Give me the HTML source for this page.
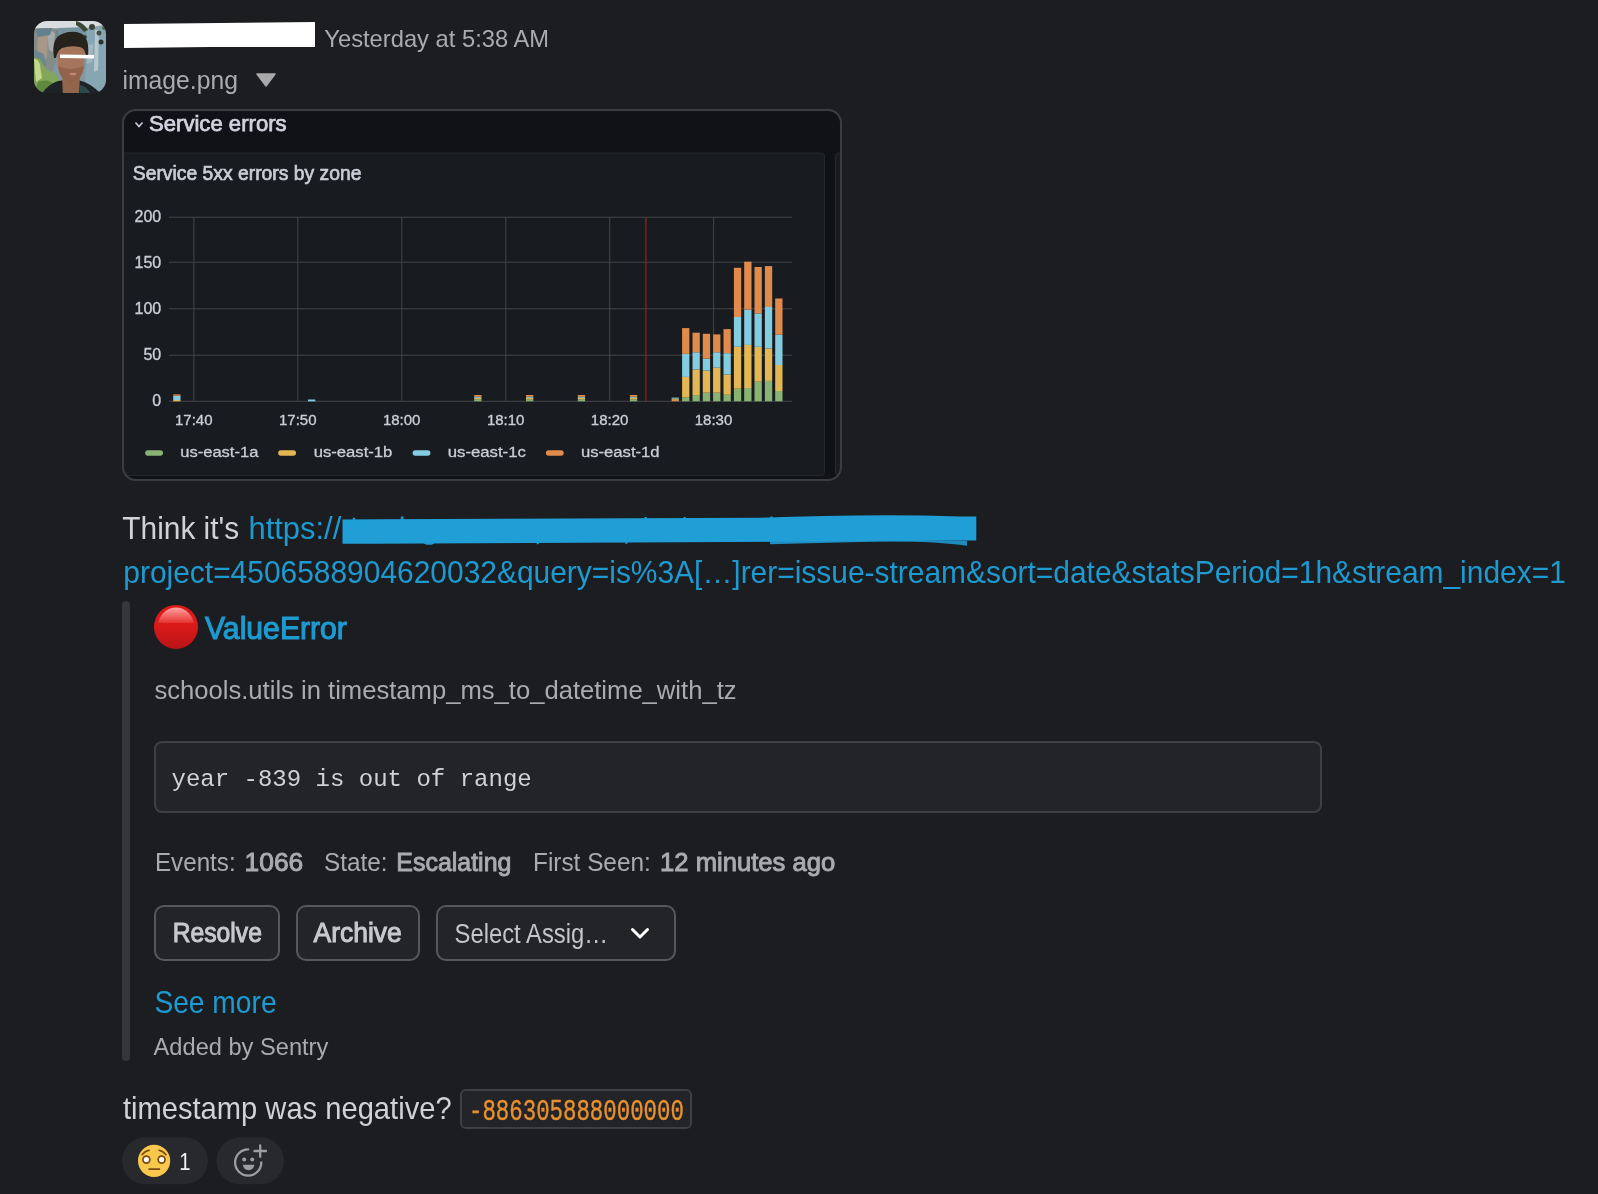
<!DOCTYPE html>
<html><head><meta charset="utf-8"><title>Slack message</title>
<style>
html,body{margin:0;padding:0;background:#1b1d21;width:1598px;height:1194px;overflow:hidden;font-family:"Liberation Sans",sans-serif;}
svg{position:absolute;left:0;top:0;display:block;will-change:transform}
</style></head>
<body>
<svg width="1598" height="1194" viewBox="0 0 1598 1194">
<defs>
<clipPath id="av"><rect x="34" y="21" width="72" height="72" rx="13" ry="13"/></clipPath>
<linearGradient id="sky" x1="0" y1="0" x2="0" y2="1">
<stop offset="0" stop-color="#e9ecef"/><stop offset="0.12" stop-color="#cfd8dc"/><stop offset="0.3" stop-color="#9fb2bd"/><stop offset="1" stop-color="#8fb0bf"/></linearGradient>
<radialGradient id="redball" cx="0.45" cy="0.3" r="0.75">
<stop offset="0" stop-color="#ff8a80"/><stop offset="0.25" stop-color="#f0453a"/><stop offset="0.6" stop-color="#d41a14"/><stop offset="1" stop-color="#a3100c"/></radialGradient>
<radialGradient id="yface" cx="0.5" cy="0.4" r="0.6">
<stop offset="0" stop-color="#fcd45a"/><stop offset="1" stop-color="#f2b52f"/></radialGradient>
</defs>
<defs><filter id="soft" x="-5%" y="-5%" width="110%" height="110%"><feGaussianBlur stdDeviation="0.6"/></filter></defs>
<g clip-path="url(#av)"><g filter="url(#soft)">
<rect x="30" y="17" width="80" height="80" fill="#7f98a2"/>
<path d="M30 17 L110 17 L110 24 Q90 29 70 29 Q50 27 30 31 Z" fill="#d9dde0"/>
<path d="M30 29 Q44 27 58 29 L60 36 L56 60 L50 80 L30 80 Z" fill="#858b88"/>
<path d="M38 33 Q44 30 48 35 L47 58 L40 62 L37 48 Z" fill="#a89886"/>
<path d="M47 31 Q52 30 55 34 L53 52 L49 50 Z" fill="#a3abad"/>
<path d="M34 50 L44 54 L46 66 L36 68 Z" fill="#6a8893"/>
<path d="M36 29 L52 28 L50 35 L38 37 Z" fill="#62808d"/>
<path d="M56 30 L62 30 L60 44 L55 44 Z" fill="#6f8488"/>
<path d="M86 28 L110 24 L110 97 L84 97 L86 60 Z" fill="#87a6b3"/>
<path d="M95 30 L99 30 L98 70 L94 72 Z" fill="#c3cfd4" opacity="0.8"/>
<path d="M88 45 L93 44 L92 62 L87 64 Z" fill="#b1c1c8" opacity="0.7"/>
<path d="M58 28 L86 27 L86 40 L58 36 Z" fill="#7793a0"/>
<path d="M76 21 Q84 23 88 30 L84 32 Q80 27 76 25 Z" fill="#3b4838"/>
<circle cx="92" cy="27" r="3" fill="#394537"/>
<circle cx="99" cy="33" r="2.5" fill="#435040"/>
<circle cx="101" cy="42" r="2.5" fill="#2b332d"/>
<circle cx="85" cy="37" r="2" fill="#3d4a3c"/>
<circle cx="104" cy="28" r="2" fill="#56644f"/>
<path d="M30 58 Q40 56 42 63 Q46 70 52 72 Q60 76 60 85 L58 97 L30 97 Z" fill="#82a65a"/>
<path d="M34 59 Q38 58 40 65 L42 78 L36 82 Z" fill="#c3d88a"/>
<path d="M38 82 Q48 78 54 84 L52 97 L34 97 Z" fill="#5e8a3c"/>
<path d="M40 97 Q46 85 58 81 L66 80 L78 80 Q92 83 104 97 Z" fill="#1d2226"/>
<path d="M80 85 Q88 86 92 97 L80 97 Z" fill="#2c4850"/>
<path d="M62 76 L80 76 L79 97 L63 97 Z" fill="#94654d"/>
<path d="M57 50 Q56 41 71 41 Q86 41 85 50 L84 68 Q81 82 71 83 Q61 82 58 68 Z" fill="#a5745c"/>
<path d="M58 66 Q71 72 84 66 Q81 82 71 83 Q61 82 58 66 Z" fill="#855640" opacity="0.6"/>
<ellipse cx="73" cy="74" rx="3.5" ry="1.3" fill="#d98a86" opacity="0.8"/>
<path d="M54 58 Q51 38 62 34 Q71 30 80 33 Q90 37 88 56 L86 56 Q85 48 80 47 Q71 45 62 48 Q57 51 56 58 Z" fill="#25201d"/>
</g>
<path d="M60 54.5 L94 55 L94 58.5 L60 58 Z" fill="#ffffff"/>
</g>
<path d="M124 24 L315 22 L315 47 L210 47 L124 48 Z" fill="#ffffff"/>
<text x="324.30" y="47.0" font-size="24.0" fill="#ababad" textLength="224.71" lengthAdjust="spacingAndGlyphs" font-family='"Liberation Sans", sans-serif' >Yesterday at 5:38 AM</text>
<text x="122.50" y="89.0" font-size="26.0" fill="#ababad" textLength="115.40" lengthAdjust="spacingAndGlyphs" font-family='"Liberation Sans", sans-serif' >image.png</text>
<path d="M257 74 L275 74 L266 86 Z" fill="#a9a9ab" stroke="#a9a9ab" stroke-width="1.5" stroke-linejoin="round"/>
<defs><clipPath id="gf"><rect x="123" y="110" width="718" height="370" rx="13" ry="13"/></clipPath></defs>
<g clip-path="url(#gf)">
<rect x="122" y="109" width="720" height="372" fill="#111217"/>
<rect x="110" y="153" width="714.5" height="322.5" rx="3" fill="#181b1f" stroke="#25272c" stroke-width="1"/>
<rect x="835.5" y="153" width="30" height="322.5" rx="3" fill="#181b1f" stroke="#25272c" stroke-width="1"/>
<path d="M135.5 122.5 L139 126.5 L142.5 122.5" fill="none" stroke="#ccccdc" stroke-width="1.6"/>
<text x="149.00" y="131.0" font-size="21.8" fill="#d2d3de" textLength="137.59" lengthAdjust="spacingAndGlyphs" font-family='"Liberation Sans", sans-serif' stroke="#d2d3de" stroke-width="0.75">Service errors</text>
<text x="132.80" y="180.4" font-size="20.5" fill="#ccccd6" textLength="228.60" lengthAdjust="spacingAndGlyphs" font-family='"Liberation Sans", sans-serif' stroke="#ccccd6" stroke-width="0.7">Service 5xx errors by zone</text>
<rect x="169" y="400.7" width="623" height="1.3" fill="#3b3c40"/>
<rect x="169" y="354.6" width="623" height="1.3" fill="#3b3c40"/>
<rect x="169" y="308.1" width="623" height="1.3" fill="#3b3c40"/>
<rect x="169" y="261.6" width="623" height="1.3" fill="#3b3c40"/>
<rect x="169" y="216.6" width="623" height="1.3" fill="#3b3c40"/>
<rect x="193.2" y="217.1" width="1.3" height="184.2" fill="#3b3c40"/>
<rect x="297.1" y="217.1" width="1.3" height="184.2" fill="#3b3c40"/>
<rect x="401.1" y="217.1" width="1.3" height="184.2" fill="#3b3c40"/>
<rect x="505.1" y="217.1" width="1.3" height="184.2" fill="#3b3c40"/>
<rect x="609.0" y="217.1" width="1.3" height="184.2" fill="#3b3c40"/>
<rect x="712.9" y="217.1" width="1.3" height="184.2" fill="#3b3c40"/>
<rect x="645.2" y="217.1" width="1.4" height="184.2" fill="#8a1f18"/>
<text x="161.2" y="221.9" font-size="16" fill="#ccccd6" stroke="#ccccd6" stroke-width="0.35" text-anchor="end" font-family='"Liberation Sans", sans-serif'>200</text>
<text x="161.2" y="268.3" font-size="16" fill="#ccccd6" stroke="#ccccd6" stroke-width="0.35" text-anchor="end" font-family='"Liberation Sans", sans-serif'>150</text>
<text x="161.2" y="314.3" font-size="16" fill="#ccccd6" stroke="#ccccd6" stroke-width="0.35" text-anchor="end" font-family='"Liberation Sans", sans-serif'>100</text>
<text x="161.2" y="360.3" font-size="16" fill="#ccccd6" stroke="#ccccd6" stroke-width="0.35" text-anchor="end" font-family='"Liberation Sans", sans-serif'>50</text>
<text x="161.2" y="406.3" font-size="16" fill="#ccccd6" stroke="#ccccd6" stroke-width="0.35" text-anchor="end" font-family='"Liberation Sans", sans-serif'>0</text>
<text x="193.8" y="424.7" font-size="15" fill="#ccccd6" stroke="#ccccd6" stroke-width="0.35" text-anchor="middle" font-family='"Liberation Sans", sans-serif'>17:40</text>
<text x="297.8" y="424.7" font-size="15" fill="#ccccd6" stroke="#ccccd6" stroke-width="0.35" text-anchor="middle" font-family='"Liberation Sans", sans-serif'>17:50</text>
<text x="401.7" y="424.7" font-size="15" fill="#ccccd6" stroke="#ccccd6" stroke-width="0.35" text-anchor="middle" font-family='"Liberation Sans", sans-serif'>18:00</text>
<text x="505.7" y="424.7" font-size="15" fill="#ccccd6" stroke="#ccccd6" stroke-width="0.35" text-anchor="middle" font-family='"Liberation Sans", sans-serif'>18:10</text>
<text x="609.6" y="424.7" font-size="15" fill="#ccccd6" stroke="#ccccd6" stroke-width="0.35" text-anchor="middle" font-family='"Liberation Sans", sans-serif'>18:20</text>
<text x="713.5" y="424.7" font-size="15" fill="#ccccd6" stroke="#ccccd6" stroke-width="0.35" text-anchor="middle" font-family='"Liberation Sans", sans-serif'>18:30</text>
<rect x="173.2" y="400.0" width="7.3" height="1.3" fill="#e3b753"/>
<rect x="173.2" y="395.8" width="7.3" height="4.2" fill="#84cde0"/>
<rect x="173.2" y="394.4" width="7.3" height="1.4" fill="#e08b4b"/>
<rect x="474.2" y="399.2" width="7.3" height="2.1" fill="#89b373"/>
<rect x="474.2" y="397.8" width="7.3" height="1.4" fill="#e3b753"/>
<rect x="474.2" y="396.8" width="7.3" height="1.0" fill="#84cde0"/>
<rect x="474.2" y="395.0" width="7.3" height="1.8" fill="#e08b4b"/>
<rect x="526.0" y="399.2" width="7.3" height="2.1" fill="#89b373"/>
<rect x="526.0" y="397.8" width="7.3" height="1.4" fill="#e3b753"/>
<rect x="526.0" y="396.8" width="7.3" height="1.0" fill="#84cde0"/>
<rect x="526.0" y="395.0" width="7.3" height="1.8" fill="#e08b4b"/>
<rect x="577.8" y="399.2" width="7.3" height="2.1" fill="#89b373"/>
<rect x="577.8" y="397.8" width="7.3" height="1.4" fill="#e3b753"/>
<rect x="577.8" y="396.8" width="7.3" height="1.0" fill="#84cde0"/>
<rect x="577.8" y="395.0" width="7.3" height="1.8" fill="#e08b4b"/>
<rect x="629.9" y="399.2" width="7.3" height="2.1" fill="#89b373"/>
<rect x="629.9" y="397.8" width="7.3" height="1.4" fill="#e3b753"/>
<rect x="629.9" y="396.8" width="7.3" height="1.0" fill="#84cde0"/>
<rect x="629.9" y="395.0" width="7.3" height="1.8" fill="#e08b4b"/>
<rect x="308.0" y="399.5" width="7.3" height="1.8" fill="#84cde0"/>
<rect x="671.6" y="399.8" width="7.3" height="1.5" fill="#e08b4b"/>
<rect x="671.6" y="398.6" width="7.3" height="1.2" fill="#e3b753"/>
<rect x="671.6" y="397.6" width="7.3" height="1.0" fill="#84cde0"/>
<rect x="682.1" y="397.2" width="7.3" height="4.1" fill="#89b373"/>
<rect x="682.1" y="376.9" width="7.3" height="20.3" fill="#e3b753"/>
<rect x="682.1" y="353.9" width="7.3" height="23.0" fill="#84cde0"/>
<rect x="682.1" y="328.1" width="7.3" height="25.8" fill="#e08b4b"/>
<rect x="692.5" y="395.1" width="7.3" height="6.2" fill="#89b373"/>
<rect x="692.5" y="369.5" width="7.3" height="25.6" fill="#e3b753"/>
<rect x="692.5" y="352.3" width="7.3" height="17.2" fill="#84cde0"/>
<rect x="692.5" y="332.7" width="7.3" height="19.6" fill="#e08b4b"/>
<rect x="702.8" y="392.7" width="7.3" height="8.6" fill="#89b373"/>
<rect x="702.8" y="370.6" width="7.3" height="22.1" fill="#e3b753"/>
<rect x="702.8" y="358.6" width="7.3" height="12.0" fill="#84cde0"/>
<rect x="702.8" y="333.8" width="7.3" height="24.8" fill="#e08b4b"/>
<rect x="713.1" y="392.7" width="7.3" height="8.6" fill="#89b373"/>
<rect x="713.1" y="367.7" width="7.3" height="25.0" fill="#e3b753"/>
<rect x="713.1" y="352.3" width="7.3" height="15.4" fill="#84cde0"/>
<rect x="713.1" y="334.4" width="7.3" height="17.9" fill="#e08b4b"/>
<rect x="723.5" y="394.7" width="7.3" height="6.6" fill="#89b373"/>
<rect x="723.5" y="374.4" width="7.3" height="20.3" fill="#e3b753"/>
<rect x="723.5" y="353.2" width="7.3" height="21.2" fill="#84cde0"/>
<rect x="723.5" y="329.1" width="7.3" height="24.1" fill="#e08b4b"/>
<rect x="733.9" y="388.7" width="7.3" height="12.6" fill="#89b373"/>
<rect x="733.9" y="346.8" width="7.3" height="41.9" fill="#e3b753"/>
<rect x="733.9" y="317.0" width="7.3" height="29.8" fill="#84cde0"/>
<rect x="733.9" y="267.8" width="7.3" height="49.2" fill="#e08b4b"/>
<rect x="744.2" y="388.0" width="7.3" height="13.3" fill="#89b373"/>
<rect x="744.2" y="344.9" width="7.3" height="43.1" fill="#e3b753"/>
<rect x="744.2" y="309.6" width="7.3" height="35.3" fill="#84cde0"/>
<rect x="744.2" y="261.7" width="7.3" height="47.9" fill="#e08b4b"/>
<rect x="754.5" y="381.7" width="7.3" height="19.6" fill="#89b373"/>
<rect x="754.5" y="346.8" width="7.3" height="34.9" fill="#e3b753"/>
<rect x="754.5" y="313.4" width="7.3" height="33.4" fill="#84cde0"/>
<rect x="754.5" y="267.0" width="7.3" height="46.4" fill="#e08b4b"/>
<rect x="764.9" y="380.9" width="7.3" height="20.4" fill="#89b373"/>
<rect x="764.9" y="348.5" width="7.3" height="32.4" fill="#e3b753"/>
<rect x="764.9" y="307.0" width="7.3" height="41.5" fill="#84cde0"/>
<rect x="764.9" y="266.1" width="7.3" height="40.9" fill="#e08b4b"/>
<rect x="775.2" y="391.0" width="7.3" height="10.3" fill="#89b373"/>
<rect x="775.2" y="365.0" width="7.3" height="26.0" fill="#e3b753"/>
<rect x="775.2" y="334.7" width="7.3" height="30.3" fill="#84cde0"/>
<rect x="775.2" y="298.5" width="7.3" height="36.2" fill="#e08b4b"/>
<rect x="145.2" y="450.3" width="17.8" height="5.4" rx="2.7" fill="#89b373"/>
<text x="180.20" y="456.7" font-size="15.5" fill="#ccccd6" textLength="78.19" lengthAdjust="spacingAndGlyphs" font-family='"Liberation Sans", sans-serif' stroke="#ccccd6" stroke-width="0.3">us-east-1a</text>
<rect x="278.2" y="450.3" width="17.8" height="5.4" rx="2.7" fill="#e3b753"/>
<text x="313.70" y="456.7" font-size="15.5" fill="#ccccd6" textLength="78.69" lengthAdjust="spacingAndGlyphs" font-family='"Liberation Sans", sans-serif' stroke="#ccccd6" stroke-width="0.3">us-east-1b</text>
<rect x="412.6" y="450.3" width="17.8" height="5.4" rx="2.7" fill="#84cde0"/>
<text x="447.70" y="456.7" font-size="15.5" fill="#ccccd6" textLength="78.21" lengthAdjust="spacingAndGlyphs" font-family='"Liberation Sans", sans-serif' stroke="#ccccd6" stroke-width="0.3">us-east-1c</text>
<rect x="545.9" y="450.3" width="17.8" height="5.4" rx="2.7" fill="#e08b4b"/>
<text x="580.90" y="456.7" font-size="15.5" fill="#ccccd6" textLength="78.69" lengthAdjust="spacingAndGlyphs" font-family='"Liberation Sans", sans-serif' stroke="#ccccd6" stroke-width="0.3">us-east-1d</text>
</g>
<rect x="123" y="110" width="718" height="370" rx="13" ry="13" fill="none" stroke="#3c3d41" stroke-width="2"/>
<text x="122.30" y="538.6" font-size="31.0" fill="#d1d2d3" textLength="116.90" lengthAdjust="spacingAndGlyphs" font-family='"Liberation Sans", sans-serif' >Think it's</text>
<text x="248.50" y="538.6" font-size="31.0" fill="#1d9bd1" textLength="92.78" lengthAdjust="spacingAndGlyphs" font-family='"Liberation Sans", sans-serif' >https://</text>
<path d="M770 541 L967 541 L967 545.8 Q935 541 880 541.5 L770 544.3 Z" fill="#1f8cbf"/>
<path d="M352.6 521 L352.8 517.8 L355.2 517.8 L355.2 521 Z M400.5 521 L401 516.6 L403.5 516.6 L403.5 521 Z M644 520 L644.6 517 L646.8 517 L646.8 520 Z M683 520 L683.6 517 L685.8 517 L685.8 520 Z M770 519 L770.4 516.4 L772.6 516.4 L772.6 519 Z" fill="#1d9bd1"/>
<ellipse cx="429" cy="542.6" rx="5.5" ry="2.2" fill="#1d9bd1"/>
<path d="M537 542 L539.5 542 L538.6 544.3 L536.5 544.3 Z M625.5 541.5 L628 541.5 L627.2 543.8 L625 543.8 Z" fill="#1d9bd1"/>
<path d="M342.5 519.4 L760 517.8 Q870 513.6 960 516.4 L976.3 516.4 L976.3 540.5 L880 541.2 L342.5 543.8 Z" fill="#209ed6"/>
<text x="123.30" y="582.8" font-size="30.5" fill="#1d9bd1" textLength="1442.49" lengthAdjust="spacingAndGlyphs" font-family='"Liberation Sans", sans-serif' >project=4506588904620032&amp;query=is%3A[…]rer=issue-stream&amp;sort=date&amp;statsPeriod=1h&amp;stream_index=1</text>
<rect x="122" y="601" width="8" height="460" rx="4" fill="#35373b"/>
<defs><linearGradient id="rb" x1="0" y1="0" x2="0" y2="1"><stop offset="0" stop-color="#de1a1a"/><stop offset="0.5" stop-color="#da1919"/><stop offset="1" stop-color="#b81416"/></linearGradient><linearGradient id="rh" gradientUnits="userSpaceOnUse" x1="0" y1="607.5" x2="0" y2="623"><stop offset="0" stop-color="#fda4a3"/><stop offset="0.5" stop-color="#f36a67"/><stop offset="1" stop-color="#e5322f"/></linearGradient><clipPath id="rhc"><rect x="150" y="600" width="50" height="23"/></clipPath></defs>
<circle cx="176" cy="626.9" r="22" fill="url(#rb)"/>
<ellipse cx="176" cy="627" rx="18.3" ry="19.6" fill="url(#rh)" clip-path="url(#rhc)"/>
<text x="205.00" y="639.0" font-size="31.0" fill="#1d9bd1" textLength="141.89" lengthAdjust="spacingAndGlyphs" font-family='"Liberation Sans", sans-serif' stroke="#1d9bd1" stroke-width="1.1">ValueError</text>
<text x="154.40" y="698.6" font-size="25.2" fill="#ababad" textLength="582.19" lengthAdjust="spacingAndGlyphs" font-family='"Liberation Sans", sans-serif' >schools.utils in timestamp_ms_to_datetime_with_tz</text>
<rect x="155" y="742" width="1166" height="70" rx="7" fill="#232428" stroke="#3d3f43" stroke-width="2"/>
<text x="171.50" y="785.6" font-size="24.5" fill="#d1d2d3" textLength="360.21" lengthAdjust="spacingAndGlyphs" font-family='"Liberation Mono", monospace' >year -839 is out of range</text>
<text x="155.00" y="870.8" font-size="26.0" fill="#ababad" textLength="80.60" lengthAdjust="spacingAndGlyphs" font-family='"Liberation Sans", sans-serif' >Events:</text>
<text x="244.60" y="870.8" font-size="26.0" fill="#ababad" textLength="58.59" lengthAdjust="spacingAndGlyphs" font-family='"Liberation Sans", sans-serif' stroke="#ababad" stroke-width="0.95">1066</text>
<text x="324.00" y="870.8" font-size="26.0" fill="#ababad" textLength="63.50" lengthAdjust="spacingAndGlyphs" font-family='"Liberation Sans", sans-serif' >State:</text>
<text x="396.30" y="870.8" font-size="26.0" fill="#ababad" textLength="115.09" lengthAdjust="spacingAndGlyphs" font-family='"Liberation Sans", sans-serif' stroke="#ababad" stroke-width="0.95">Escalating</text>
<text x="533.00" y="870.8" font-size="26.0" fill="#ababad" textLength="117.80" lengthAdjust="spacingAndGlyphs" font-family='"Liberation Sans", sans-serif' >First Seen:</text>
<text x="660.10" y="870.8" font-size="26.0" fill="#ababad" textLength="175.10" lengthAdjust="spacingAndGlyphs" font-family='"Liberation Sans", sans-serif' stroke="#ababad" stroke-width="0.95">12 minutes ago</text>
<rect x="155.0" y="906" width="124.0" height="54" rx="9" fill="#222428" stroke="#56585c" stroke-width="2"/>
<rect x="297.0" y="906" width="122.0" height="54" rx="9" fill="#222428" stroke="#56585c" stroke-width="2"/>
<rect x="437.0" y="906" width="238.0" height="54" rx="9" fill="#222428" stroke="#56585c" stroke-width="2"/>
<text x="172.70" y="941.9" font-size="27.0" fill="#c8c9cc" textLength="89.20" lengthAdjust="spacingAndGlyphs" font-family='"Liberation Sans", sans-serif' stroke="#c8c9cc" stroke-width="1.0">Resolve</text>
<text x="313.50" y="941.9" font-size="27.0" fill="#c8c9cc" textLength="88.19" lengthAdjust="spacingAndGlyphs" font-family='"Liberation Sans", sans-serif' stroke="#c8c9cc" stroke-width="1.0">Archive</text>
<text x="454.60" y="942.8" font-size="27.5" fill="#c4c5c7" textLength="153.41" lengthAdjust="spacingAndGlyphs" font-family='"Liberation Sans", sans-serif' >Select Assig…</text>
<path d="M632.5 929.5 L640 937 L647.5 929.5" fill="none" stroke="#ffffff" stroke-width="3" stroke-linecap="round" stroke-linejoin="round"/>
<text x="154.40" y="1012.9" font-size="31.5" fill="#1d9bd1" textLength="122.21" lengthAdjust="spacingAndGlyphs" font-family='"Liberation Sans", sans-serif' >See more</text>
<text x="153.60" y="1054.8" font-size="24.7" fill="#ababad" textLength="174.69" lengthAdjust="spacingAndGlyphs" font-family='"Liberation Sans", sans-serif' >Added by Sentry</text>
<text x="122.90" y="1118.5" font-size="30.5" fill="#d1d2d3" textLength="328.71" lengthAdjust="spacingAndGlyphs" font-family='"Liberation Sans", sans-serif' >timestamp was negative?</text>
<rect x="461" y="1090" width="230" height="38" rx="5" fill="#232428" stroke="#3d3f43" stroke-width="2"/>
<text x="469.00" y="1119.6" font-size="29.5" fill="#e8912d" textLength="214.89" lengthAdjust="spacingAndGlyphs" font-family='"Liberation Mono", monospace' stroke="#e8912d" stroke-width="0.4">-886305888000000</text>
<rect x="122" y="1137.3" width="86" height="47" rx="23.5" fill="#27292d"/>
<rect x="216.4" y="1137.3" width="67.6" height="47" rx="23.5" fill="#27292d"/>
<circle cx="154.1" cy="1160.8" r="16.1" fill="#f8c84c"/>
<circle cx="146.4" cy="1159.6" r="4.3" fill="#7a4a12"/><circle cx="146.4" cy="1159.6" r="2.6" fill="#ffffff"/>
<circle cx="161.6" cy="1159.6" r="4.3" fill="#7a4a12"/><circle cx="161.6" cy="1159.6" r="2.6" fill="#ffffff"/>
<path d="M142 1154.8 Q145 1151 149.2 1150.3" fill="none" stroke="#7a4a12" stroke-width="1.5" stroke-linecap="round"/>
<path d="M159 1150.3 Q163 1151 166 1154.8" fill="none" stroke="#7a4a12" stroke-width="1.5" stroke-linecap="round"/>
<path d="M149.2 1169.2 L159.3 1169.2" fill="none" stroke="#7a4a12" stroke-width="1.8" stroke-linecap="round"/>
<text x="179.30" y="1170.1" font-size="24.5" fill="#f2f2f2" textLength="11.30" lengthAdjust="spacingAndGlyphs" font-family='"Liberation Sans", sans-serif' >1</text>
<path d="M248.2 1149.4 A13.1 13.1 0 1 0 261.3 1162.5" fill="none" stroke="#9d9ea0" stroke-width="2.3" stroke-linecap="round"/>
<circle cx="244.2" cy="1159.5" r="2" fill="#9d9ea0"/><circle cx="252.2" cy="1159.5" r="2" fill="#9d9ea0"/>
<path d="M242.8 1164.8 L254.4 1164.8 Q253.6 1170.2 248.6 1170.2 Q243.6 1170.2 242.8 1164.8 Z" fill="#9d9ea0"/>
<path d="M260.2 1145.3 L260.2 1156.8 M254.4 1151 L266 1151" fill="none" stroke="#9d9ea0" stroke-width="2.3" stroke-linecap="round"/>
</svg>
</body></html>
